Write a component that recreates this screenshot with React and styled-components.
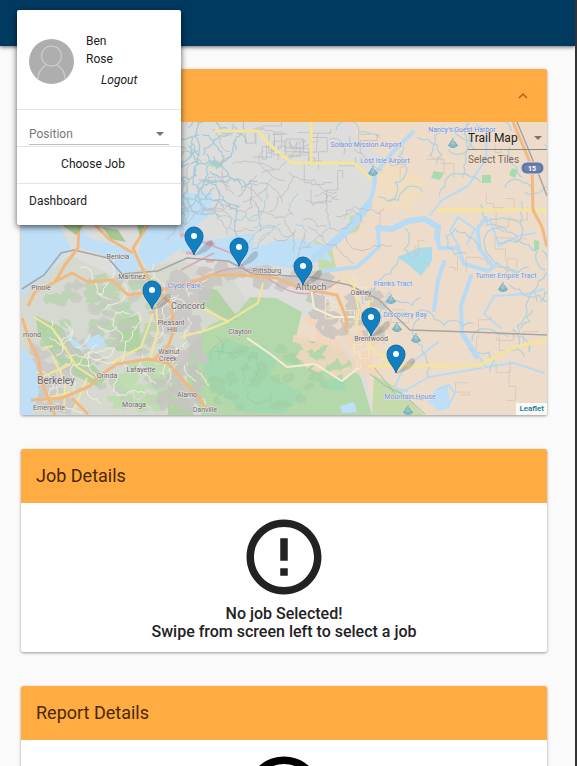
import React from "react";
import styled, { createGlobalStyle } from "styled-components";

const GlobalStyle = createGlobalStyle`
  * { box-sizing: border-box; }
  body { margin: 0; background: #fafafa; }
  body, button, select { font-family: Roboto, "Liberation Sans", sans-serif; }
`;

const Page = styled.div`
  position: relative;
  height: 100vh;
  overflow: hidden;
  background: #fafafa;
  border-right: 2px solid #333;
  color: #212121;
`;
const TopBar = styled.header`
  height: 46px;
  background: #003a60;
  box-shadow: 0 1px 4px rgba(0, 0, 0, 0.6);
`;
const Content = styled.main`
  display: flex;
  flex-direction: column;
  gap: 34px;
  padding: 23px 28px 0 21px;
`;
const Card = styled.section`
  flex: none;
  border-radius: 2px;
  overflow: hidden;
  background: #fff;
  box-shadow: 0 1px 3px rgba(0, 0, 0, 0.4);
`;
const CardHeader = styled.div`
  display: flex;
  align-items: center;
  justify-content: ${(p) => (p.$end ? "flex-end" : "flex-start")};
  height: ${(p) => (p.$end ? 53 : 54)}px;
  padding: 0 15px;
  background: #ffad42;
`;
const CardTitle = styled.h2`
  margin: 0;
  font-size: 18px;
  font-weight: 400;
  line-height: 24px;
  color: #4a2708;
`;
const ToggleButton = styled.button`
  display: flex;
  padding: 2px;
  border: 0;
  background: none;
  color: #a4691c;
`;
const MapArea = styled.div`
  position: relative;
  aspect-ratio: 526 / 293;
`;
const MapSvg = styled.svg`
  display: block;
  width: 100%;
  height: 100%;
`;
const TileControl = styled.div`
  position: absolute;
  top: 4px;
  right: 0;
  width: 79px;
`;
const SelectBox = styled.div`
  display: flex;
  align-items: center;
  position: relative;
  border-bottom: 1px solid ${(p) => (p.$strong ? "#8b8580" : "#bdbdbd")};
`;
const Select = styled.select`
  appearance: none;
  width: 100%;
  height: ${(p) => (p.$large ? 23 : 21)}px;
  padding: 0;
  border: 0;
  background: none;
  font-size: 12px;
  color: ${(p) => (p.$large ? "#222" : "#777")};
`;
const Arrow = styled.svg`
  position: absolute;
  right: 5px;
  pointer-events: none;
`;
const TileLabel = styled.label`
  display: block;
  font-size: 10px;
  line-height: 20px;
  color: #756b62;
`;
const Attribution = styled.a`
  position: absolute;
  right: 0;
  bottom: 0;
  padding: 0 3px;
  background: rgba(255, 255, 255, 0.8);
  font-size: 8px;
  font-weight: 500;
  line-height: 12px;
  color: #087c9d;
  text-decoration: none;
`;
const Notice = styled.div`
  display: flex;
  flex-direction: column;
  align-items: center;
  padding: 9px 16px 11px;
  font-size: 16px;
  font-weight: 500;
  line-height: 18px;
  text-align: center;
  color: ${(p) => (p.$black ? "#000" : "#222")};
  svg { display: block; margin-bottom: 3px; }
`;
const Menu = styled.aside`
  position: absolute;
  top: 10px;
  left: 17px;
  width: 164px;
  border-radius: 2px;
  background: #fff;
  box-shadow: 0 2px 6px rgba(0, 0, 0, 0.65);
  font-size: 12px;
`;
const Profile = styled.div`
  display: flex;
  align-items: center;
  gap: 12px;
  height: 99px;
  padding: 4px 12px 0;
`;
const Name = styled.div`
  line-height: 18px;
`;
const Logout = styled.button`
  display: block;
  margin: 3px 0 2px 15px;
  padding: 0;
  border: 0;
  background: none;
  font-size: 12px;
  font-style: italic;
  line-height: 18px;
  color: #212121;
`;
const MenuField = styled.div`
  height: 37px;
  padding: 13px 12px 0;
  border-top: 1px solid #e4e4e4;
`;
const MenuButton = styled.button`
  display: block;
  width: 100%;
  height: 37px;
  padding: 0 24px 2px 12px;
  border: 0;
  border-top: 1px solid #e4e4e4;
  background: none;
  font-size: 12px;
  color: #212121;
  text-align: center;
`;
const MenuLink = styled.a`
  display: block;
  height: 42px;
  padding: 0 12px;
  border-top: 1px solid #e4e4e4;
  line-height: 34px;
  color: #212121;
  text-decoration: none;
`;

function seeded(seed) {
  let s = seed;
  return () => {
    s = (s * 16807) % 2147483647;
    return s / 2147483647;
  };
}

/* Winding lines scattered over a rectangle, for minor roads and sloughs. */
function scatter(seed, count, x, y, w, h, step, square) {
  const r = seeded(seed);
  let d = "";
  for (let i = 0; i < count; i++) {
    d += `M${(x + r() * w).toFixed(1)} ${(y + r() * h).toFixed(1)}`;
    let a = r() * 6.28;
    const n = 3 + Math.floor(r() * 5);
    for (let j = 0; j < n; j++) {
      if (square) {
        const len = ((r() - 0.5) * step * 3).toFixed(1);
        d += j % 2 ? `h${len}` : `v${len}`;
      } else {
        a += (r() - 0.5) * 2.2;
        d += `q${(Math.cos(a + 0.5) * step * 0.6).toFixed(1)} ${(Math.sin(a + 0.5) * step * 0.6).toFixed(1)} ${(Math.cos(a) * step).toFixed(1)} ${(Math.sin(a) * step).toFixed(1)}`;
      }
    }
  }
  return d;
}

/* Small irregular patches of land cover. */
function patches(seed, count, x, y, w, h, size) {
  const r = seeded(seed);
  let d = "";
  for (let i = 0; i < count; i++) {
    const cx = x + r() * w;
    const cy = y + r() * h;
    for (let j = 0; j < 7; j++) {
      const a = (j / 7) * 6.28;
      const k = size * (0.4 + r() * 0.8);
      d += `${j ? "L" : "M"}${(cx + Math.cos(a) * k * 1.3).toFixed(1)} ${(cy + Math.sin(a) * k).toFixed(1)}`;
    }
    d += "Z";
  }
  return d;
}

const towns = [
  ["Benicia", 118, 259, 7], ["Martinez", 132, 279, 7], ["Pinole", 41, 290, 7],
  ["mond", 32, 337, 7], ["Concord", 188, 309, 9], ["Pleasant", 171, 325, 7],
  ["Hill", 172, 332, 7], ["Walnut", 169, 354, 7], ["Creek", 168, 361, 7],
  ["Lafayette", 141, 372, 7], ["Orinda", 107, 378, 7], ["Berkeley", 56, 384, 10],
  ["Emeryville", 49, 410, 7], ["Moraga", 134, 407, 7], ["Alamo", 187, 397, 7],
  ["Danville", 205, 412, 7], ["Clayton", 240, 334, 7], ["Pittsburg", 267, 273, 7],
  ["Antioch", 311, 290, 9], ["Oakley", 361, 295, 7], ["Brentwood", 371, 341, 7],
];
const parks = [
  ["Solano Mission Airport", 366, 147, "#718fd3"], ["Lost Isle Airport", 385, 163, "#718fd3"],
  ["Nancy's Guest Harbor", 462, 132, "#718fd3"], ["Franks Tract", 393, 286, "#7197cf"],
  ["Discovery Bay", 405, 317, "#7197cf"], ["Turner Empire Tract", 506, 278, "#7197cf"],
  ["Mountain House", 410, 399, "#7197cf"], ["Clyde Park", 184, 288, "#7589c8"],
];
const pins = [[194, 256], [239, 267], [303, 286], [152, 310], [371, 337], [396, 374]];
const boats = [[453, 143], [373, 171], [503, 287], [391, 299], [397, 327], [416, 338], [408, 410]];

function TrailMap() {
  return (
    <MapSvg viewBox="21 122 526 293" preserveAspectRatio="xMidYMid slice" role="img" aria-label="Trail map">
      <rect x="21" y="122" width="526" height="293" fill="#dddddc" />
      {/* Land cover */}
      <path fill="#eedccb" d="M547 122H352L360 145 382 155 372 205 356 225 322 245 327 267 318 284 344 306 300 318 295 340 344 346 365 371 374 415H547Z" />
      <path fill="#d6d9cf" d="M21 295L70 255 112 275 180 260 232 278 258 320 208 330 190 355 206 415H21Z" />
      <path fill="#b5d8ab" d="M189 346L210 325 238 312 250 297 276 298 302 312 296 338 322 343 344 351 361 378 372 415H202L187 380Z" />
      <path fill="#a4d8ae" d="M207 352L230 340 246 347 265 345 277 362 270 376 303 393 283 414 245 412 216 391 203 371ZM326 380L346 378 346 391 322 389Z" />
      <path fill="#b1d2a5" d="M119 320L138 315 142 352 115 351ZM36 316L61 327 82 353 106 378 99 387 65 371 38 334ZM199 286L217 290 240 321 222 318 199 302ZM168 386L187 397 194 415H168Z" />
      <path fill="#b4d3ad" opacity=".75" d={patches(7, 46, 45, 278, 112, 70, 6)} />
      <path fill="#c5c7bf" opacity=".7" d={patches(11, 44, 65, 280, 105, 125, 6)} />
      <path fill="#b5dda7" opacity=".75" d={patches(21, 35, 115, 365, 70, 45, 6)} />
      <path fill="#9dcda0" opacity=".5" d={patches(5, 30, 213, 345, 110, 65, 6)} />
      <path fill="#efd6bd" opacity=".9" d={patches(18, 32, 302, 318, 70, 55, 7)} />
      <path fill="#c8c5c4" opacity=".85" d={patches(3, 44, 157, 276, 46, 85, 8)} />
      <path fill="#c9c5c2" opacity=".9" d={patches(9, 30, 205, 266, 125, 20, 7)} />
      <path fill="#c8c4bf" opacity=".85" d={patches(31, 26, 315, 294, 65, 43, 8)} />
      <path fill="#c9c7c4" opacity=".8" d={patches(41, 25, 35, 350, 35, 60, 8)} />
      <path fill="#c5c3c1" opacity=".8" d={patches(71, 20, 158, 368, 42, 42, 7)} />
      <path fill="#f1dec0" d="M378 160L430 182 410 210 376 205ZM378 344L398 352 411 378 389 367Z" />
      <path fill="#c6dbac" d="M314 240L332 248 336 268 320 273ZM350 216L365 212 358 231 347 235ZM374 375L398 388 424 415H372Z" />
      <path fill="#a7dcaf" d="M434 171l10 2-4 7-9-2ZM482 175h9v8h-9ZM512 168l6 2-3 8-6-3ZM534 240l5 1v9h-5ZM213 160l10 3-4 5-9-2Z" />

      {/* Open water */}
      <g fill="#bfdff7">
        <path d="M21 224H58L71 248 57 262 48 276 34 284 21 297ZM21 345L36 365 39 392 33 415H21ZM79 225L90 238 108 243 132 252 141 264 135 272 115 273 106 256 80 248ZM147 224H183L182 247 167 258 148 270 138 253ZM180 193H212V213L190 230 180 234ZM181 234L212 240 253 233 253 248 275 241 296 239 322 245 333 262 319 258 304 270 267 265 244 268 222 260 181 252Z" />
        <path d="M64 332L80 344 84 352 73 346ZM84 340L99 334 107 346 88 349ZM436 389L448 385 450 408 438 411 427 401ZM340 406L354 402 357 412 342 413Z" />
      </g>
      <path fill="#a8dce8" d="M403 255L418 248 432 247 432 261 421 276 410 266 397 257Z" />
      <g fill="none" stroke="#b7daf5" strokeLinecap="round" strokeLinejoin="round">
        <path strokeWidth="8" d="M315 258L338 239 355 222 368 205" />
        <path strokeWidth="6" d="M437 238L438 227 425 219 408 221 392 229 378 228" />
        <path strokeWidth="4" d="M367 207Q377 187 374 175L391 154 413 132M323 271L357 267 379 247 378 228M438 238L439 248 458 248 464 264 488 271 496 265M491 264L479 248 478 228 486 218M444 262L438 280 434 310M471 276L461 306 462 334 476 357" />
        <path strokeWidth="2" d="M477 125l10 7-1 27-18 27-26 14-12 15M459 247l-9-16 8-14 17 12-8 15M490 219l9 27 19-10 17-3M544 289l-18 5-32 2-10 18 17 14M407 391l-13-3 9-18 35-28M438 389l11-4 6 9-7 11M482 368l-53 9-30 17M465 335l11 17 10 15 28-4 30 10" />
      </g>
      <path d={scatter(44, 38, 180, 125, 66, 90, 7)} fill="none" stroke="#a8cad7" strokeWidth="1.2" />
      <path d={scatter(84, 33, 380, 126, 160, 240, 11)} fill="none" stroke="#b3d3df" strokeWidth="1.3" />
      <path d={scatter(64, 10, 246, 190, 50, 52, 7)} fill="none" stroke="#b1cfdb" strokeWidth="1" />

      {/* Minor roads */}
      <path d={scatter(91, 42, 182, 125, 180, 113, 9)} fill="none" stroke="#bcbec1" strokeWidth=".8" />
      <path d={scatter(24, 18, 255, 123, 106, 57, 13, true)} fill="none" stroke="#b9bac0" strokeWidth=".7" />
      <path d={scatter(94, 22, 380, 125, 160, 276, 12, true)} fill="none" stroke="#d3c4b8" strokeWidth=".7" />
      <path d={scatter(13, 38, 36, 280, 160, 130, 7)} fill="none" stroke="#f2f0df" strokeWidth="1" />
      <path d={scatter(57, 24, 323, 290, 70, 78, 7, true)} fill="none" stroke="#f4e5c5" strokeWidth="1" />
      <g fill="none" stroke="#8ebb92" strokeWidth=".8">
        <path d={scatter(17, 9, 212, 350, 70, 50, 6)} opacity=".4" />
        <path d="M370 374l17 13 16 7 22 20M373 366l23 29 27 5" />
      </g>
      <path d="M199 282Q238 255 272 281T340 280M182 234l49 19 16 18M181 270l33-17" stroke="#d4a9b6" strokeWidth="1.5" fill="none" />
      <path d="M180 235h7m8 2h8m5 7h7m-29 9h8m12 8h8m-9-18h8" stroke="#e2aeba" strokeWidth="3" />
      <path d="M22 289L44 275 61 253 74 250 108 258 122 274 158 271 187 258 228 261 253 274 310 277 349 285 378 299 410 330 470 332 547 335M517 122l20 48 10 26" fill="none" stroke="#a8a5a2" strokeWidth="1.5" />

      {/* Highways */}
      <g fill="none" stroke="#f5e59a" strokeWidth="2" strokeLinejoin="round">
        <path strokeWidth="3" d="M215 131H258L270 145 292 163H354L371 179M311 122V162M436 210H547M368 366L480 365 515 347 547 340" />
        <path d="M156 305L158 330 150 359M181 337L207 330 227 322 258 303 263 283M193 303L229 322M52 355L65 382 64 412M87 378L74 410M43 348L53 346M42 377L71 364M46 398L82 390M342 275l11 8 6 28-3 18M369 300v45l22 20M113 362l28-15 12-33M34 317l19 12 24 38 17 11" />
        <path stroke="#f2efd4" d="M310 281l4 27 20 9h20M247 338l22 15 18 14 28-3 27 17 16-13" />
      </g>
      <g fill="none" stroke="#f0b981" strokeWidth="3" strokeLinejoin="round">
        <path d="M28 306L35 292 55 282 65 265 78 248 79 225M22 318L30 342 38 358 43 385 55 415M47 286L72 273 88 282 112 280 128 295 151 292 190 283 211 275 240 275 277 278 300 288 337 295 347 320 345 332M148 225L133 248 142 268 156 291 171 303 174 329 168 347 153 360M31 400l31-2 28-12 12-12 15-10 31-5 20 4 15 17 16 18 9 13M95 225l14 14 24 14M513 122l19 45 1 43 9 17 5 20M72 398l16 16" />
      </g>
      <g fill="#92bd72" opacity=".7">
        <path d="M62 225h22l-8 10ZM102 227l16 3 8 12-15-3ZM137 225h8l-5 12Z" />
      </g>

      <g fontFamily="Roboto, sans-serif" textAnchor="middle">
        {towns.map(([name, x, y, size]) => (
          <text key={name} x={x} y={y} fontSize={size} fill="#66636a" stroke="#eee9e3" strokeWidth="1" paintOrder="stroke">{name}</text>
        ))}
        {parks.map(([name, x, y, fill]) => (
          <text key={name} x={x} y={y} fontSize="7" fill={fill} stroke="#e6e7ef" strokeWidth="1" paintOrder="stroke">{name}</text>
        ))}
      </g>
      {boats.map(([x, y]) => (
        <path key={x} transform={`translate(${x} ${y})`} d="M0-5V4M-1-3L-4 2H-1M1-2L4 2H1M-5 2Q0 7 5 2" fill="#8fc7d5" stroke="#70aabe" strokeWidth="1" />
      ))}
      <rect x="521" y="162" width="23" height="12" rx="6" fill="#7181ad" stroke="#d4d7e2" />
      <rect x="523" y="164" width="19" height="8" rx="4" fill="none" stroke="#596b9d" />
      <text x="532" y="171" fontSize="7" fontFamily="Roboto, sans-serif" fontWeight="700" fill="#fff" textAnchor="middle">15</text>

      {pins.map(([x, y]) => (
        <g key={x} transform={`translate(${x} ${y})`}>
          <path d="M0 0L13-14Q19-19 19-12Q16-4 0 0Z" fill="#453f3a" opacity=".22" />
          <path d="M0-1C-2-8-9-12-9-20A9 9 0 0 1 9-20C9-12 2-8 0-1Z" fill="#127fc0" stroke="#126aa3" strokeWidth="1" />
          <circle cy="-20" r="3" fill="#fff" />
        </g>
      ))}
    </MapSvg>
  );
}

function DownArrow() {
  return (
    <Arrow width="8" height="4" viewBox="0 0 8 4" aria-hidden="true">
      <path d="M0 0h8L4 4z" fill="#757575" />
    </Arrow>
  );
}

function EmptyNotice({ black }) {
  return (
    <Notice $black={black}>
      <svg width="90" height="90" viewBox="0 0 24 24" fill="currentColor" aria-hidden="true">
        <path d="M11 15h2v2h-2zm0-8h2v6h-2zm.99-5C6.47 2 2 6.48 2 12s4.47 10 9.99 10C17.52 22 22 17.52 22 12S17.52 2 11.99 2zM12 20c-4.42 0-8-3.58-8-8s3.58-8 8-8 8 3.58 8 8-3.58 8-8 8z" />
      </svg>
      <div>No job Selected!</div>
      <div>Swipe from screen left to select a job</div>
    </Notice>
  );
}

export default function App() {
  return (
    <>
      <GlobalStyle />
      <Page>
        <TopBar />
        <Content>
          <Card>
            <CardHeader $end>
              <ToggleButton aria-label="Collapse map">
                <svg width="14" height="14" viewBox="0 0 14 14" fill="none" stroke="currentColor" strokeWidth="1.5" aria-hidden="true">
                  <path d="M3 9l4-4 4 4" />
                </svg>
              </ToggleButton>
            </CardHeader>
            <MapArea>
              <TrailMap />
              <TileControl>
                <SelectBox $strong>
                  <Select id="tiles" $large defaultValue="trail">
                    <option value="trail">Trail Map</option>
                  </Select>
                  <DownArrow />
                </SelectBox>
                <TileLabel htmlFor="tiles">Select Tiles</TileLabel>
              </TileControl>
              <Attribution href="#leaflet">Leaflet</Attribution>
            </MapArea>
          </Card>
          <Card>
            <CardHeader><CardTitle>Job Details</CardTitle></CardHeader>
            <EmptyNotice />
          </Card>
          <Card>
            <CardHeader><CardTitle>Report Details</CardTitle></CardHeader>
            <EmptyNotice black />
          </Card>
        </Content>
        <Menu>
          <Profile>
            <svg width="45" height="45" viewBox="0 0 45 45" aria-hidden="true">
              <circle cx="22.5" cy="22.5" r="22.5" fill="#aeaeae" />
              <g fill="none" stroke="#cecece" strokeWidth="1.2">
                <circle cx="22.5" cy="17" r="10" />
                <path d="M9 40C9 33 12 29 17 26M28 26C33 29 36 33 36 40" />
              </g>
            </svg>
            <div>
              <Name>Ben</Name>
              <Name>Rose</Name>
              <Logout>Logout</Logout>
            </div>
          </Profile>
          <MenuField>
            <SelectBox>
              <Select aria-label="Position" defaultValue="position">
                <option value="position">Position</option>
              </Select>
              <DownArrow />
            </SelectBox>
          </MenuField>
          <MenuButton>Choose Job</MenuButton>
          <MenuLink href="#dashboard">Dashboard</MenuLink>
        </Menu>
      </Page>
    </>
  );
}
